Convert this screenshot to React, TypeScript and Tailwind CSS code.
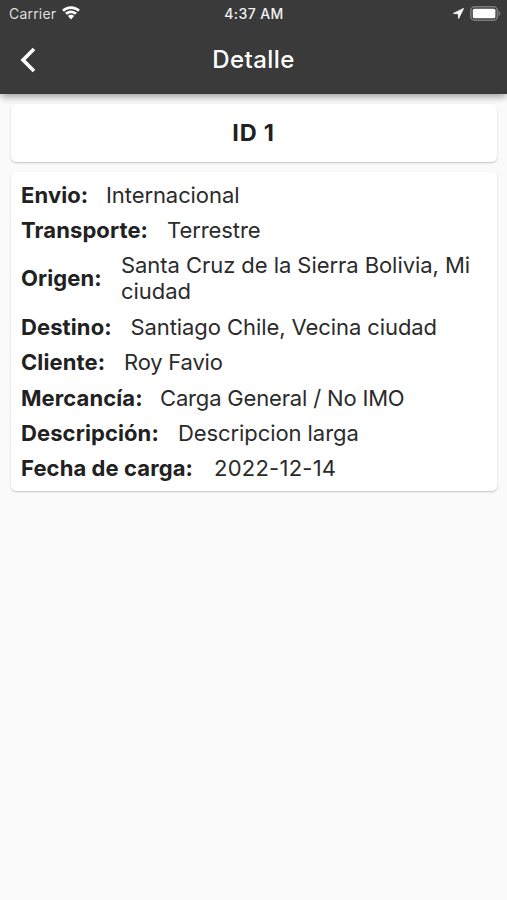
import React from 'react';

interface Field {
  label: string;
  value: string;
  gap: string;
  tracking?: string;
}

const FIELDS: Field[] = [
  { label: 'Envio:', value: 'Internacional', gap: 'w-[85px]' },
  { label: 'Transporte:', value: 'Terrestre', gap: 'w-[146px]' },
  { label: 'Origen:', value: 'Santa Cruz de la Sierra Bolivia, Mi ciudad', gap: 'w-[100px]', tracking: 'tracking-[-0.06px]' },
  { label: 'Destino:', value: 'Santiago Chile, Vecina ciudad', gap: 'w-[109.5px]' },
  { label: 'Cliente:', value: 'Roy Favio', gap: 'w-[103px]', tracking: 'tracking-[-0.2px]' },
  { label: 'Mercancía:', value: 'Carga General / No IMO', gap: 'w-[139px]', tracking: 'tracking-[-0.17px]' },
  { label: 'Descripción:', value: 'Descripcion larga', gap: 'w-[157px]' },
  { label: 'Fecha de carga:', value: '2022-12-14', gap: 'w-[193px]', tracking: 'tracking-[0.24px]' },
];

const StatusBar: React.FC = () => (
  <div className="grid h-[27px] grid-cols-[1fr_auto_1fr] items-center pl-[9px] pr-[6px] text-[14px] text-[#f2f2f2]">
    <div className="flex items-center gap-[6px]">
      <span className="tracking-[0.2px] text-[#dedede]">Carrier</span>
      <svg className="-mt-[2px]" width="18" height="14" viewBox="0 0 18 14" fill="white">
        <path d="M9 0.2C5.600 0.200 2.500 1.500 0.100 3.800L2 5.800C3.900 4 6.300 3 9 3s5.100 1 7 2.800L17.900 3.800C15.500 1.500 12.400 0.200 9 0.200Z" />
        <path d="M9 4.400c-2.300 0-4.400.9-6 2.400l2 2C6.100 7.800 7.500 7.200 9 7.200s2.900.6 4 1.600l2-2c-1.600-1.500-3.700-2.400-6-2.400Z" />
        <path d="M9 8.700c-1.200 0-2.300.5-3.100 1.200L9 13.400l3.100-3.500C11.300 9.200 10.200 8.700 9 8.700Z" />
      </svg>
    </div>
    <span className="mr-[2px] text-center font-medium tracking-[0.4px]">4:37 AM</span>
    <div className="flex items-center justify-end gap-[6px]">
      <svg width="11" height="11" viewBox="0 0 11 11" fill="white" stroke="white" strokeWidth="0.8" strokeLinejoin="round">
        <path d="M10.600 0.400L0.400 5.400L5.300 5.800L5.600 10.600Z" />
      </svg>
      <svg width="31" height="15" viewBox="0 0 31 15" fill="none">
        <rect x="0.800" y="0.800" width="26.600" height="13.400" rx="4" stroke="#7c7c7c" strokeWidth="1.600" />
        <rect x="2.800" y="2.800" width="22.600" height="9.400" rx="1.500" fill="white" />
        <path d="M28.600 5C31 5.800 31 9.200 28.600 10Z" fill="#7c7c7c" />
      </svg>
    </div>
  </div>
);

export default function App() {
  return (
    <div className="min-h-screen bg-[#fafafa] font-['Inter',sans-serif] text-[#212121]">
      <header className="relative h-[94px] bg-[#3a3a3a] text-white shadow-[0_4px_7px_-1px_rgba(0,0,0,0.36)]">
        <StatusBar />
        <div className="grid h-[66px] grid-cols-[1fr_auto_1fr] items-center">
          <svg className="ml-5" width="16" height="26" viewBox="0 0 16 26" fill="none" stroke="currentColor" strokeWidth="3.6">
            <path d="M14 2L3 13L14 24" />
          </svg>
          <h1 className="text-[24px] font-medium tracking-[0.4px]">Detalle</h1>
        </div>
      </header>

      <main className="px-[10.5px] pt-[10px]">
        <section className="flex h-[58px] items-center justify-center rounded-[5px] bg-white text-[23.5px] font-bold tracking-[0.8px] shadow-[0_1px_2px_rgba(0,0,0,0.22)]">
          ID 1
        </section>
        <section className="mt-[10px] rounded-[5px] bg-white px-[10.5px] py-[5px] shadow-[0_1px_2px_rgba(0,0,0,0.22)]">
          {FIELDS.map((field) => (
            <div key={field.label} className="flex items-center py-[4.700px] text-[22px] leading-[26px]">
              <span className={`${field.gap} shrink-0 whitespace-nowrap font-bold tracking-[0.1px]`}>{field.label}</span>
              <span className={`${field.tracking ?? 'tracking-[-0.08px]'} text-[#2b2b2b]`}>{field.value}</span>
            </div>
          ))}
        </section>
      </main>
    </div>
  );
}
